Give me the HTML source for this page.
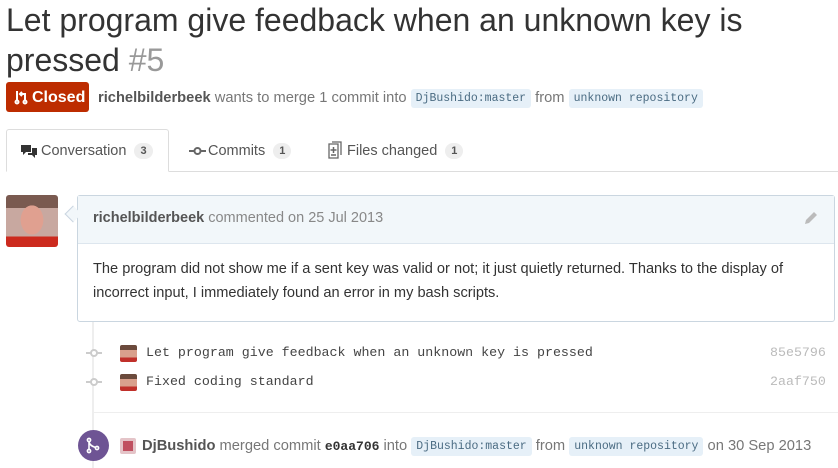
<!DOCTYPE html>
<html><head><style>
*{margin:0;padding:0;box-sizing:border-box}
body{width:838px;height:468px;overflow:hidden;background:#fff;font-family:"Liberation Sans",sans-serif;color:#333;position:relative}
.a{position:absolute}
h1{position:absolute;left:6px;top:0;font-size:32px;font-weight:normal;line-height:40px;color:#333;width:830px}
h1 span{color:#999}
.badge{left:6px;top:82px;width:83px;height:30px;background:#bd2c00;border-radius:3px;color:#fff;font-weight:bold;font-size:16px;line-height:32px;padding-left:26px}
.meta{left:98px;top:90px;font-size:14.7px;color:#777;white-space:nowrap}
.meta b{color:#555}
code{font-family:"Liberation Mono",monospace;font-size:11.5px;background:#e6f0f8;color:#4a6b82;padding:3px 5px;border-radius:3px;vertical-align:1px}
.tabline{left:6px;right:0;top:171px;height:1px;background:#ddd}
.tab{top:129px;height:43px;left:6px;width:163px;border:1px solid #ddd;border-bottom:1px solid #fff;border-radius:3px 3px 0 0;background:#fff}
.tt{top:143px;font-size:14.5px;color:#555;white-space:nowrap}
.cnt{display:inline-block;background:#eee;border-radius:10px;font-size:11px;font-weight:bold;color:#555;padding:2px 6px;margin-left:8px;vertical-align:1px}
.box{left:77px;top:195px;width:758px;height:127px;border:1px solid #cad6e0;border-radius:3px}
.hdr{height:48px;background:#f2f7fa;border-bottom:1px solid #dde6ee;font-size:14.5px;color:#888;padding:14px 15px}
.hdr b{color:#555}
.body{padding:13px 30px 13px 15px;font-size:14.6px;line-height:24px;color:#333}
.mono{font-family:"Liberation Mono",monospace;font-size:13.3px;color:#444;white-space:nowrap}
.sha{font-family:"Liberation Mono",monospace;font-size:13.3px;color:#bbb}
.av{width:17px;height:17px;border-radius:2px;background:linear-gradient(#6b4a3c 0 30%,#d9a08c 30% 75%,#c0302a 75%)}
</style></head><body>
<h1>Let program give feedback when an unknown key is pressed <span>#5</span></h1>
<div class="a badge">Closed</div>
<svg class="a" style="left:14px;top:89px" width="14" height="16" viewBox="0 0 14 16"><g fill="none" stroke="#fff" stroke-width="2"><circle cx="3" cy="13" r="1.5"/><circle cx="11" cy="13" r="1.5"/><path d="M3 2v9M11 11V5H7M8 3L6 5l2 2"/></g></svg>
<div class="a meta"><b>richelbilderbeek</b> wants to merge 1 commit into <code>DjBushido:master</code> from <code>unknown repository</code></div>
<div class="a tabline"></div>
<div class="a tab"></div>
<svg class="a" style="left:21px;top:144px" width="16" height="14" viewBox="0 0 16 14"><path fill="#333" d="M0 1h10v7H5l-3 3V8H0zM11 4h5v7h-2v3l-3-3H7V9h4z"/></svg>
<div class="a tt" style="left:41px">Conversation<span class="cnt">3</span></div>
<svg class="a" style="left:189px;top:145px" width="17" height="12" viewBox="0 0 17 12"><circle cx="8.5" cy="6" r="3" fill="none" stroke="#666" stroke-width="2"/><path d="M0 6h5M12 6h5" stroke="#666" stroke-width="2"/></svg>
<div class="a tt" style="left:208px">Commits<span class="cnt">1</span></div>
<svg class="a" style="left:328px;top:141px" width="15" height="18" viewBox="0 0 15 18"><path d="M1 3h9v14H1zM4 1h9v13" fill="none" stroke="#666" stroke-width="1.3"/><path d="M5.5 6v6M2.5 9h6M3 14h5" stroke="#666" stroke-width="1.5"/></svg>
<div class="a tt" style="left:347px">Files changed<span class="cnt">1</span></div>
<div class="a" style="left:6px;top:195px;width:52px;height:52px;border-radius:3px;background:radial-gradient(ellipse 14px 18px at 50% 48%,#e0a090 80%,transparent 82%),linear-gradient(#7a5a50 0 25%,#c8a8a0 25% 80%,#cc2a1e 80%)"></div>
<div class="a" style="left:67px;top:208px;width:12px;height:12px;background:#f2f7fa;border-left:1px solid #cad6e0;border-bottom:1px solid #cad6e0;transform:rotate(45deg);z-index:2"></div>
<div class="a box"><div class="hdr"><b>richelbilderbeek</b> commented on 25 Jul 2013</div>
<div class="body">The program did not show me if a sent key was valid or not; it just quietly returned. Thanks to the display of incorrect input, I immediately found an error in my bash scripts.</div></div>
<svg class="a" style="left:803px;top:210px" width="16" height="16" viewBox="0 0 16 16"><path d="M2 14l1-4 8-8 3 3-8 8z" fill="#bbb"/></svg>
<div class="a" style="left:92px;top:322px;width:2px;height:146px;background:#eee"></div>
<svg class="a" style="left:86px;top:348px" width="16" height="10"><circle cx="8" cy="5" r="3" fill="#fff" stroke="#ccc" stroke-width="2"/><path d="M0 5h5M11 5h5" stroke="#ccc" stroke-width="2"/></svg>
<svg class="a" style="left:86px;top:377px" width="16" height="10"><circle cx="8" cy="5" r="3" fill="#fff" stroke="#ccc" stroke-width="2"/><path d="M0 5h5M11 5h5" stroke="#ccc" stroke-width="2"/></svg>
<div class="a av" style="left:120px;top:345px"></div>
<div class="a av" style="left:120px;top:374px"></div>
<div class="a mono" style="left:146px;top:345px">Let program give feedback when an unknown key is pressed</div>
<div class="a mono" style="left:146px;top:374px">Fixed coding standard</div>
<div class="a sha" style="left:770px;top:345px">85e5796</div>
<div class="a sha" style="left:770px;top:374px">2aaf750</div>
<div class="a" style="left:94px;top:412px;width:744px;height:1px;background:#eee"></div>
<div class="a" style="left:78px;top:430px;width:31px;height:31px;border-radius:50%;background:#6e5494"></div>
<svg class="a" style="left:86px;top:437px" width="14" height="17" viewBox="0 0 14 17"><g fill="none" stroke="#fff" stroke-width="1.6"><circle cx="3" cy="3" r="1.6"/><circle cx="3" cy="14" r="1.6"/><circle cx="11" cy="11" r="1.6"/><path d="M3 5v7M3 5c1 4 5 5 6.5 5.5"/></g></svg>
<div class="a" style="left:120px;top:438px;width:16px;height:16px;background:#e4c4c8;border-radius:2px"><div style="margin:3px;width:10px;height:10px;background:#c05060"></div></div>
<div class="a" style="left:142px;top:438px;font-size:14.7px;color:#777;white-space:nowrap"><b style="color:#555">DjBushido</b> merged commit <b style="font-family:'Liberation Mono',monospace;font-size:13px;color:#333">e0aa706</b> into <code>DjBushido:master</code> from <code>unknown repository</code> on 30 Sep 2013</div>
</body></html>
